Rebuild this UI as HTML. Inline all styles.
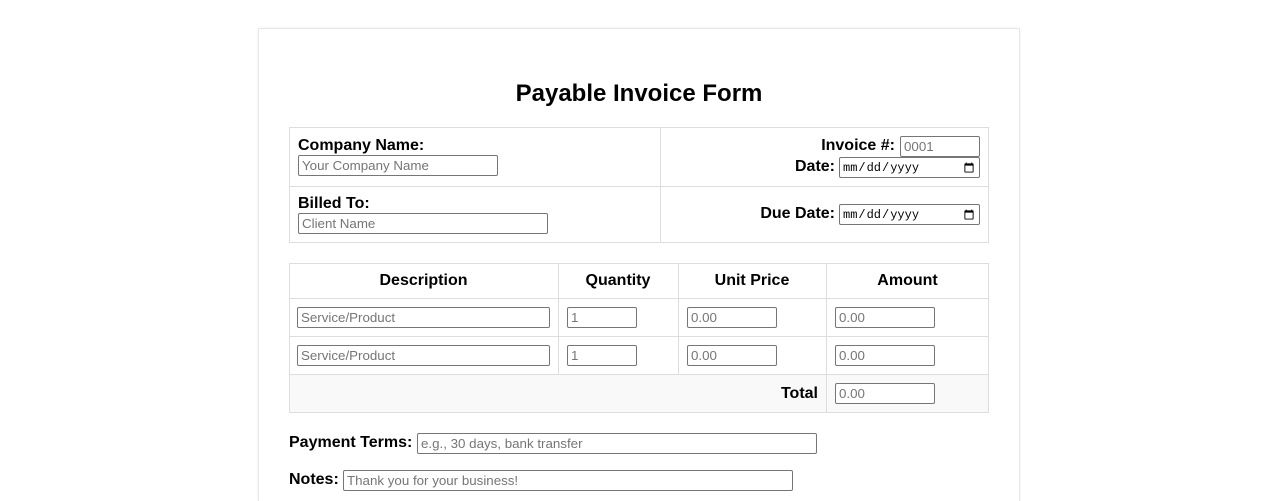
<!DOCTYPE html>
<html><head><style>
*{box-sizing:border-box}
html,body{margin:0;width:1278px;height:501px;overflow:hidden;background:#fff}
body{font-family:"Liberation Sans",Arial,sans-serif;position:relative}
.card{position:absolute;left:258px;top:28px;width:762px;height:473px;border:1px solid #e6e6e6;border-bottom:none;box-shadow:0 0 4px rgba(0,0,0,0.05)}
.a{position:absolute}
h1{position:absolute;left:0;width:1278px;top:80px;margin:0;text-align:center;font-size:24px;font-weight:bold;line-height:28px}
input{position:absolute;height:21px;border:1px solid #767676;border-radius:2px;font-family:"Liberation Sans",Arial,sans-serif;font-size:13.33px;padding:1px 3px;color:#757575;background:#fff}
input::placeholder{color:#757575;opacity:1}
input[type=date]{font-family:"Liberation Mono",monospace;font-size:12px;padding:1px 2px;color:#000}
.l{position:absolute;font-weight:bold;font-size:16px;line-height:18px;white-space:nowrap}
.box{position:absolute;border:1px solid #ddd}
.hl{position:absolute;height:1px;background:#ddd}
.vl{position:absolute;width:1px;background:#ddd}
.th{position:absolute;font-weight:bold;font-size:16px;text-align:center;top:272px;line-height:18px}
</style></head><body>
<div class="card"></div>
<h1>Payable Invoice Form</h1>

<div class="box" style="left:289px;top:127px;width:700px;height:116px"></div>
<div class="vl" style="left:660px;top:127px;height:116px"></div>
<div class="hl" style="left:289px;top:186px;width:700px"></div>
<div class="l" style="left:298px;top:137px">Company Name:</div>
<input style="left:298px;top:155px;width:200px" placeholder="Your Company Name">
<div class="l" style="left:298px;top:195px">Billed To:</div>
<input style="left:298px;top:213px;width:250px" placeholder="Client Name">
<div class="l" style="right:383px;top:137px">Invoice #:</div>
<input style="left:900px;top:136px;width:80px" placeholder="0001">
<div class="l" style="right:443px;top:158px">Date:</div>
<input type="date" style="left:839px;top:157px;width:141px">
<div class="l" style="right:443px;top:205px">Due Date:</div>
<input type="date" style="left:839px;top:204px;width:141px">

<div class="a" style="left:289px;top:374px;width:700px;height:38px;background:#f9f9f9"></div>
<div class="box" style="left:289px;top:263px;width:700px;height:150px"></div>
<div class="hl" style="left:289px;top:298px;width:700px"></div>
<div class="hl" style="left:289px;top:336px;width:700px"></div>
<div class="hl" style="left:289px;top:374px;width:700px"></div>
<div class="vl" style="left:558px;top:263px;height:111px"></div>
<div class="vl" style="left:678px;top:263px;height:111px"></div>
<div class="vl" style="left:826px;top:263px;height:149px"></div>
<div class="th" style="left:289px;width:269px">Description</div>
<div class="th" style="left:558px;width:120px">Quantity</div>
<div class="th" style="left:678px;width:148px">Unit Price</div>
<div class="th" style="left:826px;width:163px">Amount</div>
<input style="left:297px;top:307px;width:253px" placeholder="Service/Product">
<input style="left:567px;top:307px;width:70px" placeholder="1">
<input style="left:687px;top:307px;width:90px" placeholder="0.00">
<input style="left:835px;top:307px;width:100px" placeholder="0.00">
<input style="left:297px;top:345px;width:253px" placeholder="Service/Product">
<input style="left:567px;top:345px;width:70px" placeholder="1">
<input style="left:687px;top:345px;width:90px" placeholder="0.00">
<input style="left:835px;top:345px;width:100px" placeholder="0.00">
<div class="l" style="right:460px;top:385px">Total</div>
<input style="left:835px;top:383px;width:100px" placeholder="0.00">

<div class="l" style="left:289px;top:434px">Payment Terms:</div>
<input style="left:417px;top:433px;width:400px" placeholder="e.g., 30 days, bank transfer">
<div class="l" style="left:289px;top:471px">Notes:</div>
<input style="left:343px;top:470px;width:450px" placeholder="Thank you for your business!">
</body></html>
